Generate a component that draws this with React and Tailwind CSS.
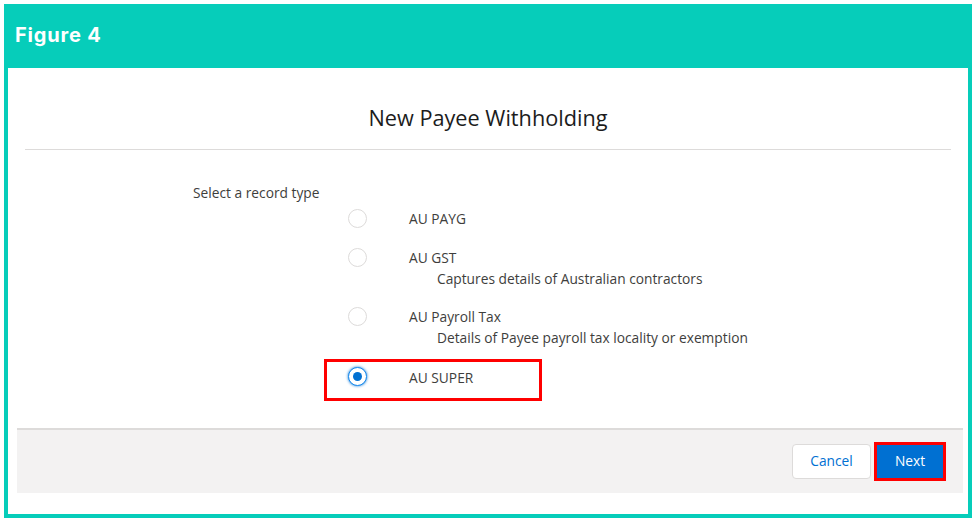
import React from "react";

const body = { fontFamily: '"Open Sans", "Noto Sans", sans-serif' };

function Radio({ checked }) {
  if (checked) {
    return (
      <span className="-mt-[3px] flex h-[19px] w-[19px] items-center justify-center rounded-full border border-[#1589ee] bg-white shadow-[0_0_3px_#0070d2]">
        <span className="h-[9px] w-[9px] rounded-full bg-[#0070d2]" />
      </span>
    );
  }
  return <span className="-mt-[2px] block h-[19px] w-[19px] rounded-full border border-[#dddbda] bg-white" />;
}

function Option({ label, desc, checked, className, boxed }) {
  return (
    <div className={"relative " + (className || "")}>
      {boxed && (
        <span className="pointer-events-none absolute left-[-24px] top-[-9px] h-[42px] w-[218px] border-[3px] border-[#ff0000]" />
      )}
      <div className="flex h-5 items-center">
        <div className="flex w-[61px] items-center">
          <Radio checked={checked} />
        </div>
        <span className="text-[13.75px] text-[#3e3e3c]">{label}</span>
      </div>
      {desc && (
        <div className="pl-[28px] ml-[61px] text-[13.75px] leading-[22px] text-[#3e3e3c]">{desc}</div>
      )}
    </div>
  );
}

export default function App() {
  return (
    <div className="h-[522px] w-[976px] bg-white p-1" style={body}>
      <div className="flex h-full flex-col border-4 border-[#06cdba] bg-white">
        <div className="-mt-px h-[61px] bg-[#06cdba] pl-[7px] pt-[16px]">
          <span
            className="text-[20px] font-bold leading-[24px] tracking-[0.8px] text-white"
            style={{ fontFamily: '"Inter", "Open Sans", sans-serif' }}
          >
            Figure 4
          </span>
        </div>

        <div className="mx-[17px] border-b border-[#dddbda] pb-[17px] pt-[36px] text-center">
          <h1 className="text-[21.7px] leading-[28px] text-[#1c1c1c]">New Payee Withholding</h1>
        </div>

        <div className="flex pt-[34px]">
          <div className="w-[185px] shrink-0" />
          <div className="flex flex-col">
            <div className="text-[13.75px] leading-[18px] text-[#3e3e3c]">Select a record type</div>
            <div className="ml-[155px] flex flex-col">
              <Option className="mt-[7px]" label="AU PAYG" />
              <Option className="mt-[19px]" label="AU GST" desc="Captures details of Australian contractors" />
              <Option className="mt-[17px]" label="AU Payroll Tax" desc="Details of Payee payroll tax locality or exemption" />
              <Option className="mt-[19px]" label="AU SUPER" checked boxed />
            </div>
          </div>
        </div>

        <div className="mb-[21px] ml-[9px] mr-[5px] mt-auto flex h-[65px] items-center justify-end gap-[3px] border-t-2 border-[#dddbda] bg-[#f3f2f2] pr-[17px]">
          <button className="h-[35px] w-[79px] rounded-[4px] border border-[#dddbda] bg-white text-[13.75px] text-[#0070d2]">
            Cancel
          </button>
          <span className="block border-[3px] border-[#ff0000]">
            <button className="block h-[33px] w-[66px] bg-[#0070d2] text-[13.75px] text-white">Next</button>
          </span>
        </div>
      </div>
    </div>
  );
}
